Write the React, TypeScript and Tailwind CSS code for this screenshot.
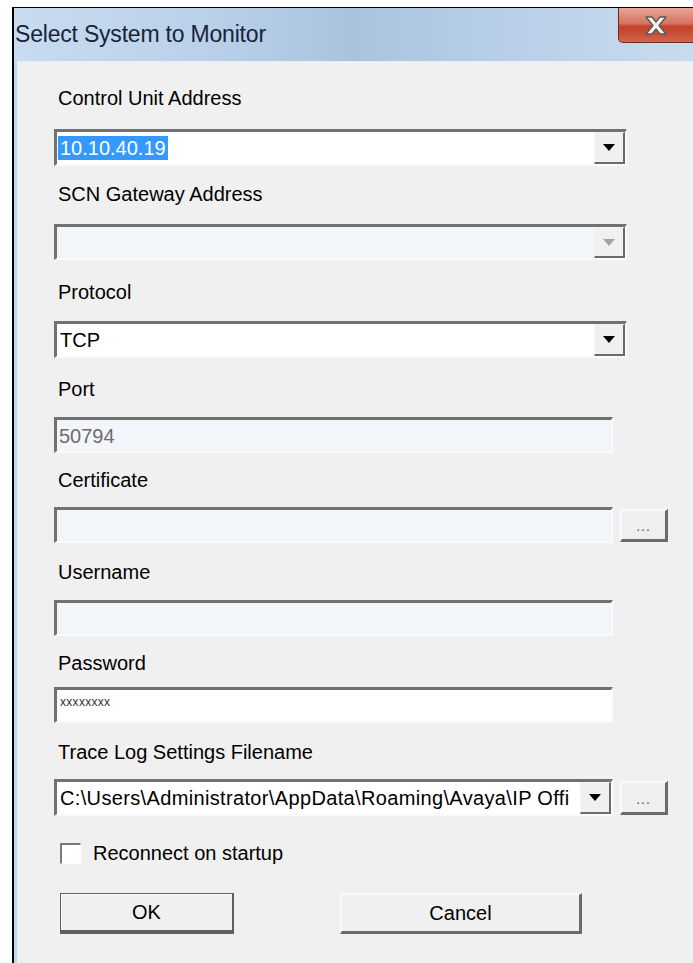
import type { ReactNode } from "react";

const FONT = { fontFamily: '"Liberation Sans", Arial, sans-serif' };

function Arrow({ disabled }: { disabled?: boolean }) {
  return (
    <svg width="12" height="7" viewBox="0 0 12 7">
      <path d="M0 0h12L6 7z" fill={disabled ? "#a3a3a3" : "#000"} />
    </svg>
  );
}

// raised push button used for the dropdown part of a combo
function DropButton({ disabled }: { disabled?: boolean }) {
  return (
    <div className="flex h-full w-[31px] shrink-0 items-center justify-center border-t border-l border-b-2 border-r-2 border-t-[#f4f4f4] border-l-[#f4f4f4] border-b-[#6a6a6a] border-r-[#6a6a6a] bg-[#f0f0f0]">
      <Arrow disabled={disabled} />
    </div>
  );
}

function Sunken({
  className,
  children,
}: {
  className: string;
  children?: ReactNode;
}) {
  return (
    <div
      className={`flex items-stretch border-t-[3px] border-l-[3px] border-b-2 border-r-2 border-t-[#717171] border-l-[#717171] border-b-[#fafafa] border-r-[#fafafa] ${className}`}
    >
      {children}
    </div>
  );
}

function Combo({
  value,
  selected,
  disabled,
  className,
  textClass = "",
}: {
  value?: string;
  selected?: boolean;
  disabled?: boolean;
  className: string;
  textClass?: string;
}) {
  return (
    <Sunken className={`${disabled ? "bg-[#f2f5fa]" : "bg-white"} ${className}`}>
      <div className="flex min-w-0 flex-1 items-center overflow-hidden whitespace-nowrap pl-[1px] text-[20px] text-black">
        {value &&
          (selected ? (
            <span className="bg-[#3399ff] px-[2px] leading-[24px] text-white">{value}</span>
          ) : (
            <span className={`pl-[2px] ${textClass}`}>{value}</span>
          ))}
      </div>
      <DropButton disabled={disabled} />
    </Sunken>
  );
}

function Ellipsis({ className }: { className: string }) {
  return (
    <div
      className={`flex items-end justify-center border-t-2 border-l-2 border-b-[3px] border-r-[3px] border-t-[#fbfbfb] border-l-[#fbfbfb] border-b-[#6b6b6b] border-r-[#6b6b6b] bg-[#efefef] pb-[6px] text-[14px] leading-none tracking-[1px] text-[#555] ${className}`}
    >
      ...
    </div>
  );
}

function Label({ children, className }: { children: ReactNode; className: string }) {
  return (
    <div className={`h-[24px] pl-[4px] text-[20px] leading-[24px] text-black ${className}`}>
      {children}
    </div>
  );
}

export default function App() {
  return (
    <div style={FONT} className="relative h-[963px] w-[693px] overflow-hidden bg-white">
      <div className="ml-[12px] mt-[7px] h-[990px] border-l-2 border-t border-black bg-[#c5d8ec]">
        {/* title bar */}
        <div className="relative flex h-[53px] items-center bg-[linear-gradient(90deg,#c8dbef_0%,#bcd2ea_25%,#a9c3df_50%,#bad0e8_75%,#c9dbee_100%)] pl-[1px]">
          <span className="text-[23px] tracking-[-0.2px] text-[#16243a]">Select System to Monitor</span>
          <div className="absolute right-[-20px] top-0 flex h-[35px] w-[95px] items-center justify-center rounded-bl-[5px] border border-t-0 border-[#6e2a20] bg-[linear-gradient(180deg,#e9a496_0%,#d9745f_45%,#c2412a_55%,#d5634a_100%)] pr-[20px]">
            <svg width="24" height="19" viewBox="0 0 24 19">
              <path
                d="M2 1h6l4 5 4-5h6l-7 8.5L22 18h-6l-4-5-4 5H2l7-8.5z"
                fill="#f4f4f4"
                stroke="#5a5a5a"
                strokeWidth="1.4"
                strokeLinejoin="round"
              />
            </svg>
          </div>
        </div>

        {/* client area */}
        <div className="ml-[3px] h-[960px] border-l border-t border-[#e8eef5] bg-[#f0f0f0] pl-[36px] pt-[24px]">
          <Label className="">Control Unit Address</Label>
          <Combo className="mt-[19px] h-[37px] w-[573px]" value="10.10.40.19" selected />

          <Label className="mt-[16px]">SCN Gateway Address</Label>
          <Combo className="mt-[18px] h-[36px] w-[573px]" disabled />

          <Label className="mt-[20px]">Protocol</Label>
          <Combo className="mt-[17px] h-[37px] w-[573px]" value="TCP" />

          <Label className="mt-[19px]">Port</Label>
          <Sunken className="mt-[16px] h-[36px] w-[559px] items-center bg-[#f2f5fa] pl-[2px] text-[20px] text-[#6d6d6d]">
            <span className="self-center">50794</span>
          </Sunken>

          <Label className="mt-[15px]">Certificate</Label>
          <div className="mt-[15px] flex items-center gap-[7px]">
            <Sunken className="h-[36px] w-[559px] bg-[#f2f5fa]" />
            <Ellipsis className="h-[33px] w-[48px]" />
          </div>

          <Label className="mt-[17px]">Username</Label>
          <Sunken className="mt-[16px] h-[36px] w-[559px] bg-[#f2f5fa]" />

          <Label className="mt-[15px]">Password</Label>
          <Sunken className="mt-[12px] h-[36px] w-[559px] bg-white pl-[3px]">
            <span className="pt-[6px] text-[12px] leading-none tracking-[0.3px] text-[#333]">xxxxxxxx</span>
          </Sunken>

          <Label className="mt-[17px]">Trace Log Settings Filename</Label>
          <div className="mt-[15px] flex items-center gap-[7px]">
            <Combo
              className="h-[37px] w-[559px]"
              textClass="tracking-[0.35px]"
              value="C:\Users\Administrator\AppData\Roaming\Avaya\IP Offi"
            />
            <Ellipsis className="h-[34px] w-[48px]" />
          </div>

          {/* reconnect checkbox */}
          <div className="mt-[25px] flex items-center pl-[6px]">
            <div className="h-[21px] w-[21px] border-t-2 border-l-2 border-b border-r border-t-[#7a7a7a] border-l-[#7a7a7a] border-b-[#fdfdfd] border-r-[#fdfdfd] bg-white" />
            <span className="ml-[12px] text-[20px] leading-[24px] text-black">Reconnect on startup</span>
          </div>

          {/* dialog buttons */}
          <div className="mt-[28px] flex pl-[6px]">
            <div className="flex h-[41px] w-[174px] items-center justify-center border border-b-[4px] border-r-[2px] border-[#5e5e5e] bg-[#f0f0f0] text-[20px] text-black shadow-[inset_1px_1px_0_#fdfdfd]">
              OK
            </div>
            <div className="ml-[106px] flex h-[41px] w-[242px] items-center justify-center border-t-2 border-l-2 border-b-[3px] border-r-[3px] border-t-[#fbfbfb] border-l-[#fbfbfb] border-b-[#6a6a6a] border-r-[#6a6a6a] bg-[#f0f0f0] text-[20px] text-black">
              Cancel
            </div>
          </div>
        </div>
      </div>
    </div>
  );
}
